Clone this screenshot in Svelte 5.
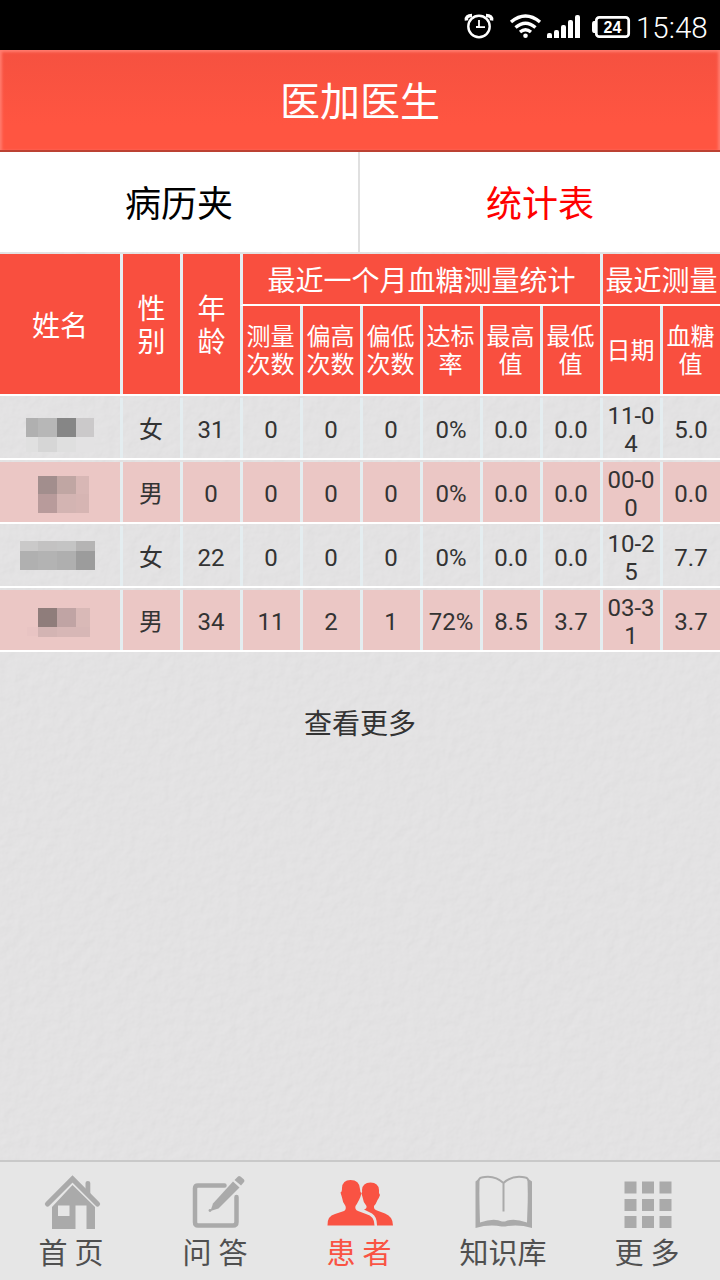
<script lang="ts">
	// Measurements shown under the "last month" header
	const monthColumns = ['测量次数', '偏高次数', '偏低次数', '达标率', '最高值', '最低值'];
	const latestColumns = ['日期', '血糖值'];

	// Names are masked, each block is [x, y, width, height, colour]
	type Block = [number, number, number, number, string];

	const patients: { mask: Block[]; values: string[] }[] = [
		{
			mask: [
				[26, 20, 12, 19, '#b0b0b0'],
				[38, 20, 19, 19, '#b7b7b7'],
				[57, 20, 19, 19, '#868686'],
				[76, 20, 18, 19, '#cbc9ca'],
				[26, 39, 12, 15, '#e0e0e0'],
				[38, 39, 19, 15, '#d6d6d6'],
				[57, 39, 19, 15, '#dfdfdf'],
				[76, 39, 18, 15, '#e3e2e3']
			],
			values: ['女', '31', '0', '0', '0', '0%', '0.0', '0.0', '11-04', '5.0']
		},
		{
			mask: [
				[38, 14, 19, 18, '#a28e8d'],
				[57, 14, 19, 18, '#c0a6a3'],
				[76, 14, 13, 18, '#d8b7b5'],
				[38, 32, 19, 19, '#b89b9b'],
				[57, 32, 19, 19, '#d3b4b2'],
				[76, 32, 13, 19, '#d6b5b3']
			],
			values: ['男', '0', '0', '0', '0', '0%', '0.0', '0.0', '00-00', '0.0']
		},
		{
			mask: [
				[20, 15, 18, 10, '#cac9c9'],
				[38, 15, 19, 10, '#c3c2c2'],
				[57, 15, 19, 10, '#c4c4c4'],
				[76, 15, 19, 10, '#b5b4b4'],
				[20, 25, 18, 19, '#b0b0b0'],
				[38, 25, 19, 19, '#b3b3b3'],
				[57, 25, 19, 19, '#afafaf'],
				[76, 25, 19, 19, '#9c9c9c']
			],
			values: ['女', '22', '0', '0', '0', '0%', '0.0', '0.0', '10-25', '7.7']
		},
		{
			mask: [
				[38, 18, 19, 19, '#8f7d7b'],
				[57, 18, 19, 19, '#c0a4a4'],
				[76, 18, 14, 19, '#d9b9b7'],
				[27, 37, 11, 9, '#e8c4c3'],
				[38, 37, 19, 10, '#d3b4b3'],
				[57, 37, 33, 10, '#d7b7b6']
			],
			values: ['男', '34', '11', '2', '1', '72%', '8.5', '3.7', '03-31', '3.7']
		}
	];

	const navItems = [
		{ id: 'home', label: '首 页' },
		{ id: 'ask', label: '问 答' },
		{ id: 'patients', label: '患 者' },
		{ id: 'library', label: '知识库' },
		{ id: 'more', label: '更 多' }
	];

	let activeTab = $state('stats');
	let activeNav = $state('patients');
</script>

<div class="screen">
	<!-- Paper texture behind the content -->
	<svg class="paper" width="720" height="1280" aria-hidden="true">
		<filter id="grain" x="0" y="0" width="100%" height="100%" color-interpolation-filters="sRGB">
			<feTurbulence type="fractalNoise" baseFrequency="0.09" numOctaves="3" seed="4" result="noise" />
			<feDiffuseLighting in="noise" lighting-color="#ffffff" surfaceScale="0.8" diffuseConstant="1.02">
				<feDistantLight azimuth="225" elevation="62" />
			</feDiffuseLighting>
		</filter>
		<rect width="720" height="1280" filter="url(#grain)" opacity="0.13" />
	</svg>

	<!-- Status bar -->
	<div class="status-bar">
		<svg class="status-icons" width="186" height="50" viewBox="450 0 186 50" fill="none" stroke="#fff">
			<circle cx="479" cy="26.500" r="10.700" stroke-width="2.400" />
			<path d="M479 20v7.200h6M476 27h3" stroke-width="1.800" />
			<path d="M466.500 20.500q-1-5 5.500-5M491.500 20.500q1-5-5.500-5" stroke-width="3.600" />
			<path d="M511 22Q525.500 10 540 22M515.500 27.500Q525.500 19 535.500 27.500M520 32Q525.500 27.500 531 32" stroke-width="3.400" />
			<circle cx="525.500" cy="35.700" r="2.300" fill="#fff" stroke="none" />
			<path
				d="M547 35a2 2 0 0 1 2-2h1a2 2 0 0 1 2 2v3h-5zM554 32a2 2 0 0 1 2-2h1a2 2 0 0 1 2 2v6h-5zM561 27a2 2 0 0 1 2-2h1a2 2 0 0 1 2 2v11h-5zM568 22a2 2 0 0 1 2-2h1a2 2 0 0 1 2 2v16h-5zM575 17a2 2 0 0 1 2-2h1a2 2 0 0 1 2 2v21h-5z"
				fill="#fff"
				stroke="none"
			/>
			<rect x="596.300" y="17.300" width="32.400" height="19.400" rx="3" stroke-width="2.700" />
			<path d="M596 21h-2q-2 0-2 3v6q0 3 2 3h2z" fill="#fff" stroke="none" />
			<text x="612.500" y="33" text-anchor="middle" fill="#fff" stroke="none">24</text>
		</svg>
		<span class="clock">15:48</span>
	</div>

	<header class="title-bar">医加医生</header>

	<!-- Top tabs -->
	<div class="tabs">
		<button class="tab" class:selected={activeTab === 'records'} onclick={() => (activeTab = 'records')}>病历夹</button>
		<button class="tab" class:selected={activeTab === 'stats'} onclick={() => (activeTab = 'stats')}>统计表</button>
	</div>

	<!-- Table header -->
	<div class="table-head">
		<div class="head-cell large">姓名</div>
		<div class="head-cell large stacked">性别</div>
		<div class="head-cell large stacked">年龄</div>
		<div class="head-cell large group month">最近一个月血糖测量统计</div>
		<div class="head-cell large group latest">最近测量</div>
		{#each [...monthColumns, ...latestColumns] as column}
			<div class="head-cell sub">{column}</div>
		{/each}
	</div>

	<!-- Table rows -->
	{#each patients as patient}
		<div class="row">
			<svg class="mask" width="120" height="60">
				{#each patient.mask as [x, y, width, height, fill]}
					<rect {x} {y} {width} {height} {fill} />
				{/each}
			</svg>
			{#each patient.values as value}
				<div class="cell"><span>{value}</span></div>
			{/each}
		</div>
	{/each}

	<button class="load-more">查看更多</button>

	<!-- Bottom navigation -->
	<nav class="bottom-nav">
		{#each navItems as item}
			<button class="nav-item" class:active={activeNav === item.id} onclick={() => (activeNav = item.id)}>
				<svg width="72" height="60" viewBox="0 0 72 60">
					{#if item.id === 'home'}
						<path d="M11.500 32 36.500 7 61.500 32" class="line" stroke-width="5.200" />
						<path d="M49.500 20V11q0-2 2.400-2t2.400 2V25z" />
						<path fill-rule="evenodd" d="M36.500 13 59 35V57H50.500V33.500H39.500V57H16V35zM22 33.500V44H33.500V33.500z" />
					{:else if item.id === 'ask'}
						<path d="M44.500 13.500H18Q15 13.500 15 16.500V50Q15 53.500 18 53.500H53Q56.500 53.500 56.500 50V25" class="line" stroke-width="4.500" />
						<path d="M33 31.500 53 9.500 59.500 15.500 38.500 36.500 30.500 39z" />
						<path d="M54.500 8 58 4.500Q59 3.500 60.500 4.500L64 7.500Q65 9 64 10L61 13.500z" />
						<circle cx="30" cy="38.500" r="1.400" />
					{:else if item.id === 'patients'}
						<path
							d="M3.500 53.500Q3 44 11 42L20 39Q22.500 37.500 21.500 34Q18.500 30.500 18 25.500L16.500 20.500Q18 20 18 16Q18.500 8 26.500 8Q35.500 8 36 17Q36 20 37.500 21Q36.500 25.500 35 28Q33 32 31.500 34Q30.500 37.500 34 39L42 42Q50.500 44 50.500 53.500z"
						/>
						<path
							d="M53 53.500Q53 44.500 48 41.500L40 37.500Q43 36.500 42.500 34Q39 30 38.500 25L37.500 21.500Q38.500 21 38 18Q38.500 10.500 46.500 10.500Q54.500 10.500 55 18Q54.500 21 56 23Q55 26 53.500 28Q52 32 50 34Q49.500 37.500 53 38.500L61 41.500Q69 44.500 69 53.500z"
						/>
					{:else if item.id === 'library'}
						<path d="M35.500 11Q26.500 2.500 13.500 5.500Q11 6 10.500 9L10 52M35.500 11Q44.500 2.500 57.500 5.500Q60 6 60.500 9L61.500 52M35.500 10.500V39.500" class="thin" />
						<path
							fill-rule="evenodd"
							d="M7.500 9.500 10.500 7 12 50.500Q26 45.500 34 49.500H37Q45 45.500 59 50.500L60.500 7 64 9.500V56Q50 52 37.500 54.500H33.500Q21.500 52 7.500 56z"
						/>
					{:else}
						{#each [9.5, 27, 44] as y}
							{#each [12.5, 30, 47.5] as x}
								<rect {x} {y} width="12" height="12" />
							{/each}
						{/each}
					{/if}
				</svg>
				<span>{item.label}</span>
			</button>
		{/each}
	</nav>
</div>

<style>
	:global(body) {
		margin: 0;
		background: #e3e2e3;
	}

	.screen {
		position: relative;
		width: 720px;
		height: 1280px;
		overflow: hidden;
		display: flex;
		flex-direction: column;
		font-family: Roboto, 'Noto Sans CJK SC', sans-serif;
		color: #333;
		isolation: isolate;
	}

	.paper {
		position: absolute;
		inset: 0;
		z-index: -1;
	}

	button {
		padding: 0;
		border: none;
		background: none;
		font-family: inherit;
		color: inherit;
	}

	/* --- Status bar --- */
	.status-bar {
		flex: none;
		height: 50px;
		display: flex;
		justify-content: flex-end;
		align-items: center;
		background: #000;
		color: #fff;
	}

	.status-icons text {
		font: bold 16px 'Liberation Sans', sans-serif;
	}

	.clock {
		width: 84px;
		padding-top: 5px;
		box-sizing: border-box;
		font-size: 29.5px;
		font-weight: 300;
		line-height: 46px;
		white-space: nowrap;
	}

	/* --- Title and tabs --- */
	.title-bar {
		flex: none;
		height: 102px;
		box-sizing: border-box;
		padding-top: 3px;
		border-bottom: 2px solid #bc4133;
		background: linear-gradient(#f55140, #ff5541 75%);
		box-shadow: inset 0 2px 3px #ff7d70, inset 3px 0 3px -1px #ff7769, inset -3px 0 3px -1px #ff7769;
		color: #fff;
		font-size: 40px;
		line-height: 100px;
		text-align: center;
	}

	.tabs {
		flex: none;
		display: grid;
		grid-template-columns: 360px 360px;
		height: 100px;
		margin-bottom: 2px;
		background: #fff;
	}

	.tab {
		box-sizing: border-box;
		padding-top: 6px;
		color: #000;
		font-size: 36px;
		line-height: 94px;
	}

	.tab:first-child {
		border-right: 2px solid #e0e0e0;
	}

	.tab.selected {
		color: #f00;
	}

	/* --- Table --- */
	.table-head {
		flex: none;
		display: grid;
		grid-template-columns: 120px repeat(10, 60px);
		grid-template-rows: 52px 88px;
		border-bottom: 2px solid #fff;
		margin-bottom: 2px;
		background: #f94f3f;
		color: #fff;
	}

	.head-cell {
		display: flex;
		align-items: center;
		justify-content: center;
		box-sizing: border-box;
		text-align: center;
	}

	.head-cell + .head-cell {
		border-left: 3px solid #e6eef2;
	}

	.large {
		grid-row: 1 / 3;
		padding-top: 4px;
		font-size: 28px;
		line-height: 33px;
	}

	.stacked {
		padding: 4px 12px 0;
	}

	.head-cell.group {
		grid-row: 1;
		border-bottom: 2px solid #fff;
		white-space: nowrap;
	}

	.month {
		grid-column: 4 / 10;
	}

	.latest {
		grid-column: 10 / 12;
	}

	.sub {
		grid-row: 2;
		padding: 2px 5px 0 3px;
		font-size: 24px;
		line-height: 28px;
	}

	.row {
		flex: none;
		display: flex;
		height: 60px;
		border-bottom: 2px solid #fff;
		margin-bottom: 2px;
	}

	.row:nth-of-type(odd) {
		background: #ebc7c5;
	}

	.mask {
		flex: none;
	}

	.cell {
		flex: none;
		display: flex;
		align-items: center;
		justify-content: center;
		width: 60px;
		box-sizing: border-box;
		border-left: 3px solid #e4edf0;
		padding: 3px 4px 0 3px;
		font-size: 24px;
		line-height: 28px;
		text-align: center;
		word-break: break-all;
	}

	.load-more {
		align-self: center;
		margin-top: 51px;
		font-size: 28px;
		line-height: 40px;
	}

	/* --- Bottom navigation --- */
	.bottom-nav {
		display: grid;
		grid-template-columns: repeat(5, 144px);
		height: 118px;
		margin-top: auto;
		border-top: 2px solid #c9c9c9;
		background: #e6e6e6;
	}

	.nav-item {
		display: flex;
		flex-direction: column;
		align-items: center;
		padding-top: 10px;
		color: #505050;
		font-size: 29px;
		line-height: 40px;
	}

	.nav-item span {
		padding: 2px 2px 0 0;
	}

	.nav-item svg {
		flex: none;
		fill: #aaa;
		stroke: none;
	}

	.nav-item .line {
		fill: none;
		stroke: #aaa;
		stroke-linecap: round;
	}

	.nav-item .thin {
		fill: none;
		stroke: #aaa;
		stroke-width: 2;
	}

	.nav-item.active {
		color: #f95343;
	}

	.nav-item.active svg {
		fill: #f95343;
	}
</style>
